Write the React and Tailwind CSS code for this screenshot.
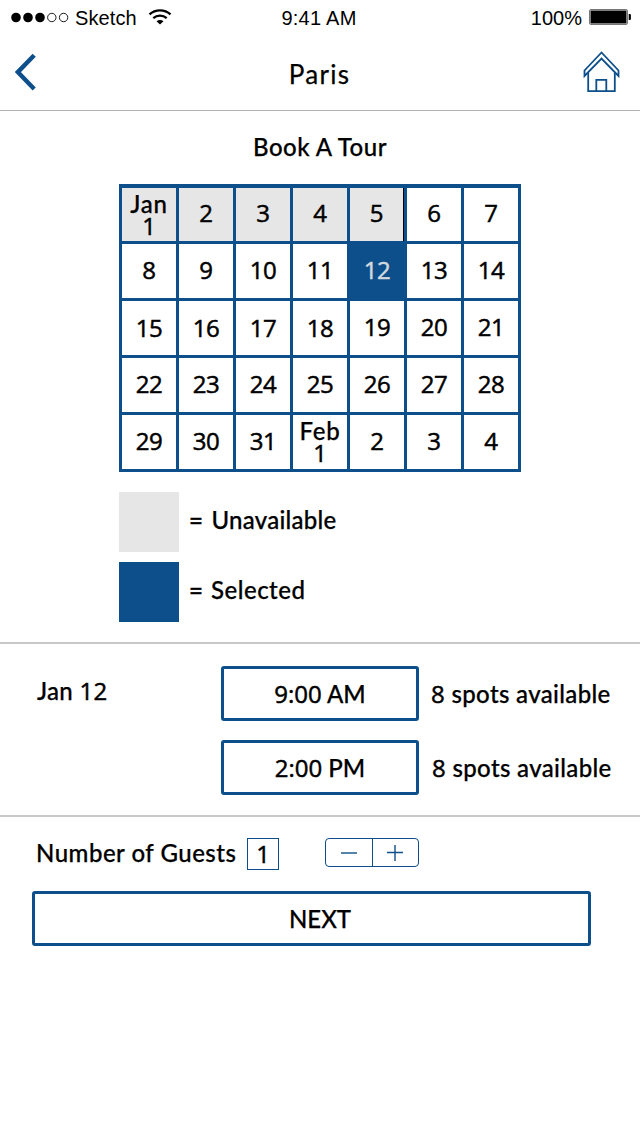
const weeks = [
  ['Jan 1', '2', '3', '4', '5', '6', '7'],
  ['8', '9', '10', '11', '12', '13', '14'],
  ['15', '16', '17', '18', '19', '20', '21'],
  ['22', '23', '24', '25', '26', '27', '28'],
  ['29', '30', '31', 'Feb 1', '2', '3', '4'],
];

const rule = 'h-[2px] w-full shrink-0 bg-[#c8c8c8]';
const digits = "font-['Open_Sans',sans-serif] font-medium [-webkit-text-stroke:0.5px_currentColor]";

function StatusBar() {
  return (
    <div className="flex h-9 shrink-0 items-center pl-[11px] pr-[9px] font-['Liberation_Sans',sans-serif] text-[20px] leading-none [-webkit-text-stroke:0px]">
      <div className="flex flex-1 items-center">
        <svg width="58" height="11" viewBox="0 0 58 11" className="mb-0.5">
          <circle cx="5" cy="5.5" r="4.8" />
          <circle cx="17" cy="5.5" r="4.8" />
          <circle cx="29" cy="5.5" r="4.8" />
          <circle cx="40.8" cy="5.5" r="4.2" fill="none" stroke="#000" strokeWidth="0.9" />
          <circle cx="52.6" cy="5.5" r="4.2" fill="none" stroke="#000" strokeWidth="0.9" />
        </svg>
        <span className="ml-[6px] w-[62px] tracking-[0.1px]">Sketch</span>
        <svg width="24" height="16" viewBox="0 0 24 16" className="ml-[11px] mb-0.5">
          <g fill="none" stroke="#000" strokeWidth="2.3">
            <path d="M1.5 5.4C7.5 0 16.5 0 22.5 5.4" />
            <path d="M5.3 9.1c3.8-3.4 9.6-3.4 13.4 0" />
          </g>
          <path d="M8.5 12.3c2-1.8 5-1.8 7 0L12 15.6z" />
        </svg>
      </div>
      <span className="mr-[4px] tracking-[0.25px]">9:41 AM</span>
      <div className="flex flex-1 items-center justify-end">
        <span>100%</span>
        <svg width="42" height="16" viewBox="0 0 42 16" className="ml-[7px] mb-0.5">
          <rect x="0.5" y="0.5" width="38" height="15" rx="1.5" fill="none" stroke="#777" />
          <rect x="1.5" y="1.5" width="36" height="13" />
          <path d="M39.7 5h1.2q1 0 1 1v4q0 1-1 1h-1.2z" />
        </svg>
      </div>
    </div>
  );
}

function Header() {
  return (
    <header className="flex h-[75px] shrink-0 items-start border-b border-[#b2b2b2] pl-[15px] pr-[20px]">
      <div className="flex-1">
        <svg width="22" height="38" viewBox="0 0 22 38" className="mt-[17px]">
          <path d="M19.2 2.2 2.8 19.1 19.2 36" fill="none" stroke="#0d4f8a" strokeWidth="4.4" />
        </svg>
      </div>
      <h1 className="ml-[4px] mt-[23px] text-[26px] font-normal leading-[30px] tracking-[1.3px]">Paris</h1>
      <div className="flex flex-1 justify-end">
        <svg width="37" height="42" viewBox="0 0 37 42" className="mt-[15px]" fill="none" stroke="#0d4f8a" strokeWidth="1.8">
          <path d="M18.5 1.5 1.5 19.5v5.5l17-17.5 17 17.5v-5.5z" />
          <path d="M5.2 21.5v18.6h26.6V21.5" />
          <path d="M13.3 40V28.8h10V40" />
        </svg>
      </div>
    </header>
  );
}

function Day({ label, week, day }) {
  const [first, second] = label.split(' ');
  if (second) {
    const shade = week === 0 ? 'bg-[#e6e6e6]' : 'bg-white';
    return (
      <div className={'flex flex-col items-center pt-[5px] leading-[22px] ' + shade}>
        <span className="tracking-[0.8px]">{first}</span>
        <span className={digits}>{second}</span>
      </div>
    );
  }
  let look = 'bg-white';
  if (week === 1 && day === 4) look = 'bg-[#0d4f8a] text-[#d4d9df] [-webkit-text-stroke-width:0.9px]';
  else if (week === 0 && day < 5) look = 'bg-[#e6e6e6]';
  if (week === 0 && day === 4) look += ' border-r border-black';
  let lift = 'pb-[2px]';
  if (week === 0) lift = 'pb-[3px]';
  if (week === 2 && day < 4) lift = 'pb-0';
  return (
    <div className={`flex items-center justify-center leading-[50px] tracking-[-0.4px] ${digits} ${look} ${lift}`}>
      {label}
    </div>
  );
}

function Num({ children }) {
  return <span className={digits}>{children}</span>;
}

function Slot({ time, period, note }) {
  return (
    <div className="flex h-[55px] items-center">
      <button className="h-[55px] w-[198px] rounded-[3px] border-[3px] border-[#0d4f8a]">
        <Num>{time}</Num> {period}
      </button>
      <span className={'whitespace-nowrap tracking-[0.35px] ' + note}>
        <Num>8</Num> spots available
      </span>
    </div>
  );
}

export default function App() {
  return (
    <div className="flex h-[1134px] w-[640px] flex-col bg-white font-['Lato',sans-serif] text-[24px] font-medium leading-[30px] text-black [-webkit-text-stroke:0.25px_currentColor]">
      <StatusBar />
      <Header />
      <h2 className="mt-[21px] text-center tracking-[0.5px]">Book A Tour</h2>
      <div className="ml-[119px] mt-[22px] grid h-[288px] w-[402px] shrink-0 grid-cols-7 grid-rows-[53px_54px_54px_54px_54px] gap-[3px] bg-[#0d4f8a] p-[3px] pt-[4px]">
        {weeks.map((row, w) => row.map((label, d) => <Day key={w + '-' + d} label={label} week={w} day={d} />))}
      </div>
      <div className="ml-[119px] mt-[20px] flex flex-col gap-[10px]">
        <div className="flex h-[60px] items-center gap-[10px]">
          <div className="size-[60px] bg-[#e6e6e6]" />
          <span className="mb-1 tracking-[0.25px]"><span className="mr-[2px] [-webkit-text-stroke:0.5px_#000]">=</span> Unavailable</span>
        </div>
        <div className="flex h-[60px] items-center gap-[10px]">
          <div className="size-[60px] bg-[#0d4f8a]" />
          <span className="mb-1 tracking-[0.5px]"><span className="mr-px [-webkit-text-stroke:0.5px_#000]">=</span> Selected</span>
        </div>
      </div>
      <div className={'mt-[20px] ' + rule} />
      <div className="mt-[22px] flex h-[129px] shrink-0 pl-[37px]">
        <span className="mt-[10px] w-[184px] tracking-[0.3px]">
          Jan <Num>12</Num>
        </span>
        <div className="flex flex-col gap-[19px]">
          <Slot time="9:00" period="AM" note="ml-[12px]" />
          <Slot time="2:00" period="PM" note="ml-[13px]" />
        </div>
      </div>
      <div className={'mt-[20px] ' + rule} />
      <div className="mt-[21px] flex h-[32px] shrink-0 items-start pl-[36px]">
        <span className="w-[211px] whitespace-nowrap tracking-[0.5px]">Number of Guests</span>
        <div className={'flex h-[32px] w-[32px] items-center justify-center border border-[#0d4f8a] pb-px ' + digits}>1</div>
        <div className="ml-[46px] flex h-[29px] w-[94px] rounded-[4px] border border-[#0d4f8a] text-[#0d4f8a]">
          <button className="flex w-[47px] items-center justify-center border-r border-[#0d4f8a]">
            <svg width="16" height="16" viewBox="0 0 16 16" stroke="currentColor" strokeWidth="1.4">
              <path d="M0 8h16" />
            </svg>
          </button>
          <button className="flex flex-1 items-center justify-center pr-[2px]">
            <svg width="16" height="16" viewBox="0 0 16 16" stroke="currentColor" strokeWidth="1.4">
              <path d="M0 7.5h16M8 0v16" />
            </svg>
          </button>
        </div>
      </div>
      <button className="ml-[32px] mt-[21px] h-[55px] w-[559px] shrink-0 rounded-[3px] border-[3px] border-[#0d4f8a] pl-[17px]">NEXT</button>
    </div>
  );
}
